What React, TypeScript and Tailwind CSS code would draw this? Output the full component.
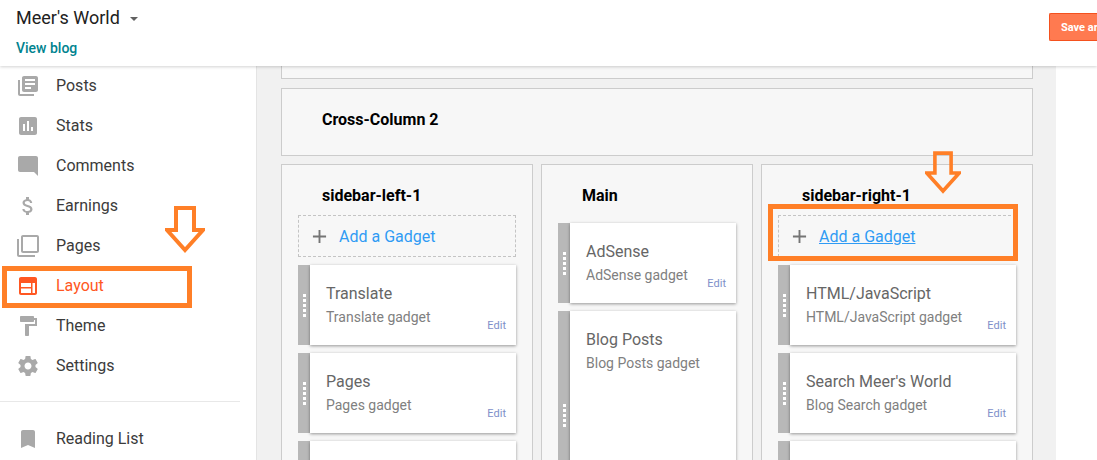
import React from 'react';

const navItems = [
  { label: 'Posts', d: 'M4 6H2v14c0 1.1.9 2 2 2h14v-2H4V6zm16-4H8c-1.1 0-2 .9-2 2v12c0 1.1.9 2 2 2h12c1.1 0 2-.9 2-2V4c0-1.1-.9-2-2-2zm-1 9H9V9h10v2zm-4 4H9v-2h6v2zm4-8H9V5h10v2z' },
  { label: 'Stats', d: 'M19 3H5c-1.1 0-2 .9-2 2v14c0 1.1.9 2 2 2h14c1.1 0 2-.9 2-2V5c0-1.1-.9-2-2-2zM9 17H7v-7h2v7zm4 0h-2V7h2v10zm4 0h-2v-4h2v4z' },
  { label: 'Comments', d: 'M21.99 4c0-1.1-.89-2-1.99-2H4c-1.1 0-2 .9-2 2v12c0 1.1.9 2 2 2h14l4 4-.01-18z' },
  { label: 'Earnings', d: 'M11.8 10.9c-2.27-.59-3-1.2-3-2.15 0-1.09 1.01-1.85 2.7-1.85 1.78 0 2.44.85 2.5 2.1h2.21c-.07-1.72-1.12-3.3-3.21-3.81V3h-3v2.16c-1.94.42-3.5 1.68-3.5 3.61 0 2.31 1.91 3.46 4.7 4.13 2.5.6 3 1.48 3 2.41 0 .69-.49 1.79-2.7 1.79-2.06 0-2.87-.92-2.98-2.1h-2.2c.12 2.19 1.76 3.42 3.68 3.83V21h3v-2.15c1.95-.37 3.5-1.5 3.5-3.55 0-2.84-2.43-3.81-4.7-4.4z' },
  { label: 'Pages', d: 'M3 5H1v16c0 1.1.9 2 2 2h16v-2H3V5zm18-4H7c-1.1 0-2 .9-2 2v14c0 1.1.9 2 2 2h14c1.1 0 2-.9 2-2V3c0-1.1-.9-2-2-2zm0 16H7V3h14v14z' },
  { label: 'Layout', active: true, d: 'M19 3H5c-1.1 0-2 .9-2 2v14c0 1.1.9 2 2 2h14c1.1 0 2-.9 2-2V5c0-1.1-.9-2-2-2zM5 9h10v4H5V9zm0 5.500h10V19H5v-4.500zM16.500 9H19v10h-2.500V9z' },
  { label: 'Theme', d: 'M18 4V3c0-.55-.45-1-1-1H5c-.55 0-1 .45-1 1v4c0 .55.45 1 1 1h12c.55 0 1-.45 1-1V6h1v4H9v11c0 .55.45 1 1 1h2c.55 0 1-.45 1-1v-9h8V4h-3z' },
  { label: 'Settings', d: 'M19.43 12.98c.04-.32.07-.64.07-.98s-.03-.66-.07-.98l2.11-1.65c.19-.15.24-.42.12-.64l-2-3.46c-.12-.22-.39-.3-.61-.22l-2.49 1c-.52-.4-1.08-.73-1.69-.98l-.38-2.65C14.46 2.18 14.25 2 14 2h-4c-.25 0-.46.18-.49.42l-.38 2.65c-.61.25-1.17.59-1.69.98l-2.49-1c-.23-.09-.49 0-.61.22l-2 3.46c-.13.22-.07.49.12.64l2.11 1.65c-.04.32-.07.65-.07.98s.03.66.07.98l-2.11 1.65c-.19.15-.24.42-.12.64l2 3.46c.12.22.39.3.61.22l2.49-1c.52.4 1.08.73 1.69.98l.38 2.65c.03.24.24.42.49.42h4c.25 0 .46-.18.49-.42l.38-2.65c.61-.25 1.17-.59 1.69-.98l2.49 1c.23.09.49 0 .61-.22l2-3.46c.12-.22.07-.49-.12-.64l-2.11-1.65zM12 15.500c-1.93 0-3.500-1.570-3.500-3.500s1.570-3.500 3.500-3.500 3.500 1.570 3.500 3.500-1.570 3.500-3.500 3.500z' },
];

const bookmark = 'M17 3H7c-1.100 0-1.990.9-1.990 2L5 21l7-3 7 3V5c0-1.100-.9-2-2-2z';

const NavRow = ({ label, d, active }: { label: string; d: string; active?: boolean }) => (
  <div className="flex h-10 items-center pl-4">
    <svg viewBox="0 0 24 24" className={`h-6 w-6 ${active ? 'fill-[#ff5722]' : 'fill-[#a9a9a9]'}`}>
      <path d={d} />
    </svg>
    <span className={`ml-4 text-base ${active ? 'text-[#ff5722]' : 'text-[#3b3b3b]'}`}>{label}</span>
  </div>
);

const Gadget = ({ title, sub, tall, edit = true }: { title?: string; sub?: string; tall?: boolean; edit?: boolean }) => (
  <div className={`flex ${tall ? 'h-[208px]' : 'h-20'} shrink-0`}>
    <div className="flex w-3 shrink-0 items-center justify-center bg-[#b8b8b8]">
      <div className="flex flex-col gap-[2px]">
        {[0, 1, 2, 3, 4].map((i) => (
          <div key={i} className="h-[3px] w-[3px] bg-white" />
        ))}
      </div>
    </div>
    <div className="relative flex-1 bg-white pl-4 pt-[19px] shadow-[0_1px_3px_rgba(0,0,0,0.4)]">
      {title && <div className="text-base leading-5 text-[#666666]">{title}</div>}
      {sub && <div className="mt-[3px] text-sm leading-5 text-[#808080]">{sub}</div>}
      {edit && title && <div className="absolute bottom-[11px] right-[10px] text-[11px] leading-4 text-[#7e8fc9]">Edit</div>}
    </div>
  </div>
);

const AddGadget = ({ underline }: { underline?: boolean }) => (
  <div className="flex h-[42px] shrink-0 items-center border border-dashed border-[#c4c4c4] pl-[13px]">
    <svg viewBox="0 0 16 16" className="h-[15px] w-[15px] stroke-[#757575]" strokeWidth="2">
      <path d="M8 1v14M1 8h14" />
    </svg>
    <span className={`ml-[12px] mt-px text-base text-[#2f9bf4] ${underline ? 'underline' : ''}`}>Add a Gadget</span>
  </div>
);

const Column = ({ title, width, children }: { title: string; width: string; children: React.ReactNode }) => (
  <div className={`${width} flex h-[320px] shrink-0 flex-col border border-[#cccccc] bg-[#f7f7f7] px-4`}>
    <div className="flex h-[50px] shrink-0 items-end pb-[9px] pl-6 text-base font-bold leading-5 text-black">{title}</div>
    {children}
  </div>
);

const Arrow = ({ className }: { className: string }) => (
  <svg viewBox="0 0 40 47" className={`absolute ${className} fill-none stroke-[#ff7f27]`} strokeWidth="4">
    <path d="M11 2h18v22h9L20 44 2 24h9z" />
  </svg>
);

export default function App() {
  return (
    <div className="relative h-[460px] w-[1097px] overflow-hidden bg-white font-['Roboto',sans-serif]">
      <header className="relative z-10 flex h-[66px] items-start justify-between bg-white shadow-[0_1px_3px_rgba(0,0,0,0.18)]">
        <div className="pl-4">
          <div className="mt-[7px] flex items-center text-lg leading-[22px] text-[#212121]">
            Meer's World
            <span className="ml-[10px] mt-[1px] h-0 w-0 border-x-[4px] border-t-[4px] border-x-transparent border-t-[#616161]" />
          </div>
          <div className="mt-[11px] text-sm font-medium leading-4 text-[#00838f]">View blog</div>
        </div>
        <div className="mt-[13px] h-7 w-12 overflow-hidden rounded-l-[2px] border border-r-0 border-[#f4511e] bg-[#ff7a50] pl-[11px] text-[11px] font-bold leading-[28px] whitespace-nowrap text-white">
          Save arrangement
        </div>
      </header>

      <div className="flex h-[394px]">
        <aside className="w-[256px] shrink-0 bg-white">
          {navItems.map((item) => (
            <NavRow key={item.label} label={item.label} d={item.d} active={item.active} />
          ))}
          <div className="mr-4 mt-[15px] border-t border-[#e8e8e8]" />
          <div className="mt-[17px]">
            <NavRow label="Reading List" d={bookmark} />
          </div>
        </aside>

        <main className="w-[800px] shrink-0 border-l border-[#e4e4e4] bg-[#f1f1f1] pl-6 pr-[23px]">
          <div className="h-[13px] border border-t-0 border-[#cccccc] bg-[#f7f7f7]" />
          <div className="mt-[9px] flex h-[68px] items-center border border-[#cccccc] bg-[#f7f7f7] pb-1 pl-10 text-base font-bold text-black">
            Cross-Column 2
          </div>
          <div className="mt-2 flex gap-2">
            <Column title="sidebar-left-1" width="w-[252px]">
              <AddGadget />
              <div className="mt-2 flex shrink-0 flex-col gap-2">
                <Gadget title="Translate" sub="Translate gadget" />
                <Gadget title="Pages" sub="Pages gadget" />
                <Gadget />
              </div>
            </Column>
            <Column title="Main" width="w-[212px]">
              <div className="mt-[8px] flex shrink-0 flex-col gap-2">
                <Gadget title="AdSense" sub="AdSense gadget" />
                <Gadget title="Blog Posts" sub="Blog Posts gadget" tall edit={false} />
              </div>
            </Column>
            <Column title="sidebar-right-1" width="w-[272px]">
              <AddGadget underline />
              <div className="mt-2 flex shrink-0 flex-col gap-2">
                <Gadget title="HTML/JavaScript" sub="HTML/JavaScript gadget" />
                <Gadget title="Search Meer's World" sub="Blog Search gadget" />
                <Gadget />
              </div>
            </Column>
          </div>
        </main>
      </div>

      {/* orange annotations drawn over the screenshot */}
      <div className="absolute left-[2px] top-[266px] h-[42px] w-[190px] border-[5px] border-[#ff7f27]" />
      <div className="absolute left-[768px] top-[204px] h-[57px] w-[250px] border-[5px] border-[#ff7f27]" />
      <Arrow className="left-[165px] top-[206px] h-[47px] w-10" />
      <Arrow className="left-[925px] top-[149px] h-[47px] w-[36px]" />
    </div>
  );
}
